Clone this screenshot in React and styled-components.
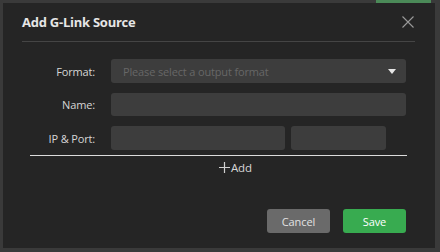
import React from "react";
import styled, { createGlobalStyle } from "styled-components";

const GlobalStyle = createGlobalStyle`
  html, body {
    margin: 0;
    padding: 0;
    background: #3a3a3a;
    font-family: "Open Sans", "Noto Sans", "Liberation Sans", sans-serif;
  }
  * { box-sizing: border-box; }
`;

const Page = styled.div`
  width: 440px;
  height: 252px;
  overflow: hidden;
  display: flex;
  flex-direction: column;
`;

const BehindStrip = styled.div`
  height: 3px;
  display: flex;
  justify-content: flex-end;
  padding-right: 9px;
`;

const GreenChip = styled.div`
  width: 55px;
  height: 3px;
  background: #4b8a58;
`;

const Modal = styled.div`
  margin-left: 3px;
  width: 432px;
  height: 245px;
  background: #252525;
  display: flex;
  flex-direction: column;
  padding: 0 29px 15px 19px;
`;

const Header = styled.div`
  height: 39px;
  display: flex;
  align-items: center;
  justify-content: space-between;
  border-bottom: 1px solid #454545;
  margin-right: -9px;
`;

const Title = styled.span`
  font-size: 13px;
  font-weight: 700;
  color: #e6e6e6;
  letter-spacing: -0.25px;
`;

const CloseButton = styled.button`
  background: none;
  border: none;
  padding: 0;
  width: 14px;
  height: 14px;
  display: flex;
  align-items: center;
  justify-content: center;
  cursor: pointer;
`;

const Form = styled.div`
  margin-top: 17px;
  display: flex;
  flex-direction: column;
  gap: 10px;
`;

const Row = styled.div`
  display: flex;
  align-items: center;
  gap: 16px;
`;

const Label = styled.label`
  width: 73px;
  text-align: right;
  font-size: 11px;
  letter-spacing: -0.15px;
  color: #d6d6d6;
`;

const Fields = styled.div`
  flex: 1;
  display: flex;
  gap: 6px;
`;

const Field = styled.div`
  height: ${(p) => p.$h || 24}px;
  width: ${(p) => (p.$w ? `${p.$w}px` : "auto")};
  flex: ${(p) => (p.$w ? "none" : 1)};
  background: #3d3d3d;
  border-radius: 3px;
  display: flex;
  align-items: center;
  justify-content: space-between;
  padding: 0 10px 0 12px;
  font-size: 11px;
  letter-spacing: -0.15px;
  color: #676767;
`;

const Divider = styled.div`
  margin: 5px 0 0 8px;
  width: 377px;
  height: 1px;
  background: #dcdcdc;
`;

const AddRow = styled.div`
  display: flex;
  padding-left: 197px;
  margin-top: 4px;
`;

const AddButton = styled.button`
  background: none;
  border: none;
  padding: 0;
  display: flex;
  align-items: center;
  gap: 1px;
  font-family: inherit;
  font-size: 11.5px;
  letter-spacing: -0.15px;
  color: #d8d8d8;
  cursor: pointer;
`;

const Footer = styled.div`
  margin-top: auto;
  display: flex;
  justify-content: flex-end;
  gap: 13px;
`;

const Button = styled.button`
  width: 63px;
  height: 24px;
  border: none;
  border-radius: 3px;
  font-family: inherit;
  font-size: 11px;
  letter-spacing: -0.1px;
  background: ${(p) => (p.$primary ? "#38ab50" : "#6a6a6a")};
  color: ${(p) => (p.$primary ? "#ffffff" : "#e2e2e2")};
  cursor: pointer;
`;

export default function App() {
  return (
    <Page>
      <GlobalStyle />
      <BehindStrip>
        <GreenChip />
      </BehindStrip>
      <Modal>
        <Header>
          <Title>Add G-Link Source</Title>
          <CloseButton aria-label="close">
            <svg width="12" height="12" viewBox="0 0 12 12">
              <path d="M0.5 0.5 L11.5 11.5 M11.5 0.5 L0.5 11.5" stroke="#9a9a9a" strokeWidth="1.1" />
            </svg>
          </CloseButton>
        </Header>
        <Form>
          <Row>
            <Label>Format:</Label>
            <Fields>
              <Field>
                <span>Please select a output format</span>
                <svg width="8" height="5" viewBox="0 0 8 5">
                  <path d="M0 0 L8 0 L4 5 Z" fill="#e6e6e6" />
                </svg>
              </Field>
            </Fields>
          </Row>
          <Row>
            <Label>Name:</Label>
            <Fields>
              <Field $h={23} />
            </Fields>
          </Row>
          <Row>
            <Label>IP &amp; Port:</Label>
            <Fields>
              <Field $w={174} />
              <Field $w={95} />
            </Fields>
          </Row>
        </Form>
        <Divider />
        <AddRow>
          <AddButton>
            <svg width="11" height="11" viewBox="0 0 11 11">
              <path d="M5.5 0 V11 M0 5.5 H11" stroke="#d0d0d0" strokeWidth="1.2" />
            </svg>
            Add
          </AddButton>
        </AddRow>
        <Footer>
          <Button>Cancel</Button>
          <Button $primary>Save</Button>
        </Footer>
      </Modal>
    </Page>
  );
}
